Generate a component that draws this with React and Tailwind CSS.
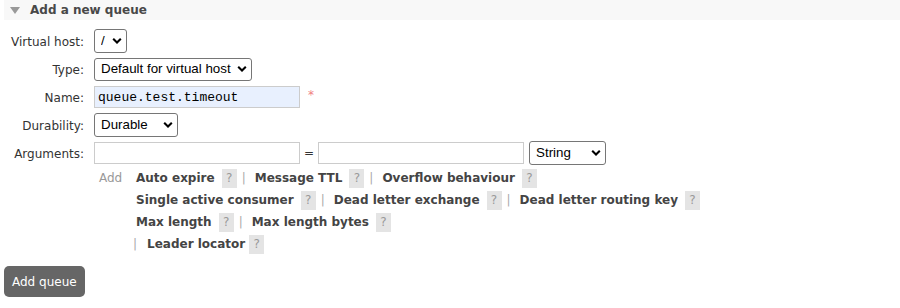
import React from "react";

function Chevron() {
  return (
    <svg
      className="pointer-events-none absolute right-[5px] top-1/2 -translate-y-1/2"
      width="10"
      height="7"
      viewBox="0 0 10 7"
    >
      <path d="M1.2 1.3 L5 5 L8.8 1.3" fill="none" stroke="#000" strokeWidth="2.1" />
    </svg>
  );
}

function Select({ value, w, h = "h-[24px]" }) {
  return (
    <div className={`relative ${w} ${h}`}>
      <select
        defaultValue={value}
        className={`appearance-none w-full h-full border border-[#767676] rounded-[3px] bg-white pl-[6px] pr-[16px] text-[13.33px] text-black font-['Liberation_Sans',Arial,sans-serif] leading-none`}
      >
        <option>{value}</option>
      </select>
      <Chevron />
    </div>
  );
}

function Help() {
  return (
    <span className="inline-flex w-[15px] h-[19px] items-center justify-center bg-[#e4e4e4] text-[#999] text-[12px] leading-none">
      ?
    </span>
  );
}

function Sep({ cls = "" }) {
  return <span className={`text-[#aaa] ${cls}`}>|</span>;
}

function Item({ label, last, gap = "ml-[7px]" }) {
  return (
    <>
      <span className="font-bold text-[#444]">{label}</span>
      <span className={gap}>
        <Help />
      </span>
      {!last && <Sep cls="ml-[5px] mr-[9px]" />}
    </>
  );
}

function Row({ label, children }) {
  return (
    <div className="flex items-center h-[28px]">
      <div className="w-[80px] text-right text-[#333] translate-y-[1px]">{label}</div>
      <div className="ml-[10px] flex items-center">{children}</div>
    </div>
  );
}

export default function App() {
  return (
    <div className="w-[900px] h-[308px] bg-white pl-[4px] font-['DejaVu_Sans',Verdana,sans-serif] text-[12px] text-[#444] overflow-hidden">
      <div className="h-[20px] bg-[#f8f8f8] flex items-center pl-[6px]">
        <svg width="10" height="7" viewBox="0 0 10 7" className="mt-[1px]">
          <path d="M0 0 L10 0 L5 7 Z" fill="#999" />
        </svg>
        <span className="ml-[10px] font-bold text-[#484848]">Add a new queue</span>
      </div>

      <div className="mt-[7px]">
        <Row label="Virtual host:">
          <Select value="/" w="w-[33px]" />
        </Row>
        <Row label="Type:">
          <Select value="Default for virtual host" w="w-[158px]" h="h-[23px]" />
        </Row>
        <Row label="Name:">
          <input
            defaultValue="queue.test.timeout"
            className="w-[206px] h-[22px] border border-[#cccccc] bg-[#e8f0fe] pl-[3px] text-[13px] text-black font-['Liberation_Mono','Courier_New',monospace]"
          />
          <span className="ml-[8px] self-start mt-[0px] text-[#f08080] text-[12px]">*</span>
        </Row>
        <Row label="Durability:">
          <Select value="Durable" w="w-[84px]" />
        </Row>
        <Row label="Arguments:">
          <input className="w-[206px] h-[22px] border border-[#cccccc] bg-white" />
          <span className="mx-[4px] text-[#333]">=</span>
          <input className="w-[206px] h-[22px] border border-[#cccccc] bg-white" />
          <div className="ml-[5px]">
            <Select value="String" w="w-[77px]" />
          </div>
        </Row>
      </div>

      <div className="flex">
        <div className="ml-[95px] w-[37px] h-[22px] flex items-center text-[#999]">Add</div>
        <div className="flex flex-col">
          <div className="h-[22px] flex items-center">
            <Item label="Auto expire" />
            <Item label="Message TTL" />
            <Item label="Overflow behaviour" last />
          </div>
          <div className="h-[22px] flex items-center">
            <Item label="Single active consumer" />
            <Item label="Dead letter exchange" />
            <Item label="Dead letter routing key" last />
          </div>
          <div className="h-[22px] flex items-center">
            <Item label="Max length" />
            <Item label="Max length bytes" last />
          </div>
          <div className="h-[22px] flex items-center -ml-[3px]">
            <Sep cls="mr-[10px]" />
            <Item label="Leader locator" last gap="ml-[4px]" />
          </div>
        </div>
      </div>

      <button className="mt-[11px] h-[31px] px-[8px] rounded-[5px] bg-[#666] text-white text-[12px]">
        Add queue
      </button>
    </div>
  );
}
